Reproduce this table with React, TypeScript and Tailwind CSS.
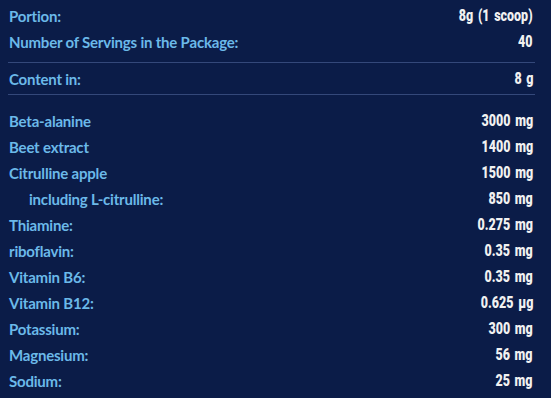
import React from 'react';

type Row = { label: string; value: string; indent?: boolean };

const basics: Row[] = [
	{ label: 'Portion:', value: '8g (1 scoop)' },
	{ label: 'Number of Servings in the Package:', value: '40' },
];

const ingredients: Row[] = [
	{ label: 'Beta-alanine', value: '3000 mg' },
	{ label: 'Beet extract', value: '1400 mg' },
	{ label: 'Citrulline apple', value: '1500 mg' },
	{ label: 'including L-citrulline:', value: '850 mg', indent: true },
	{ label: 'Thiamine:', value: '0.275 mg' },
	{ label: 'riboflavin:', value: '0.35 mg' },
	{ label: 'Vitamin B6:', value: '0.35 mg' },
	{ label: 'Vitamin B12:', value: '0.625 µg' },
	{ label: 'Potassium:', value: '300 mg' },
	{ label: 'Magnesium:', value: '56 mg' },
	{ label: 'Sodium:', value: '25 mg' },
];

const NutriRow: React.FC<{ row: Row }> = ({ row }) => (
	<div className="flex h-[26px] items-center justify-between pl-[1px] pr-[2px]">
		<span
			className={`font-['Lato',sans-serif] text-[15px] font-bold tracking-[-0.2px] text-[#6bb9e9] ${row.indent ? 'pl-[20px]' : ''}`}
		>
			{row.label}
		</span>
		<span className="inline-block origin-right scale-x-[0.78] whitespace-nowrap font-['Roboto',sans-serif] text-[16px] font-black text-[#f1f1f1] [word-spacing:2px]">
			{row.value}
		</span>
	</div>
);

export default function App() {
	return (
		<div className="h-[398px] w-[551px] overflow-hidden bg-[#0b1c48] pl-[8px] pr-[16px] pt-[3px]">
			<div className="border-b border-[#34487a] pb-[7px]">
				{basics.map((r) => (
					<NutriRow key={r.label} row={r} />
				))}
			</div>
			<div className="border-b border-[#34487a] pb-[2px] pt-[3px]">
				<NutriRow row={{ label: 'Content in:', value: '8 g' }} />
			</div>
			<div className="mt-[13px]">
				{ingredients.map((r) => (
					<NutriRow key={r.label} row={r} />
				))}
			</div>
		</div>
	);
}
